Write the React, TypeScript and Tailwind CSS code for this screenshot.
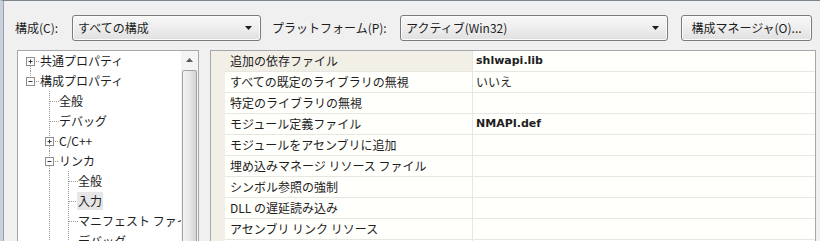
import React from 'react';

type Cell =
  | { kind: 'none' }
  | { kind: 'pass' }
  | { kind: 'tee' }
  | { kind: 'box'; sign: 'plus' | 'minus'; up: boolean; down: boolean };

type TreeItem = {
  label: string;
  cells: Cell[];
  selected?: boolean;
};

const jp = { fontFamily: '"Noto Sans CJK JP", "Noto Sans", sans-serif' };
const boldLatin = { fontFamily: '"DejaVu Sans", "Noto Sans CJK JP", sans-serif' };

const treeItems: TreeItem[] = [
  { label: '共通プロパティ', cells: [{ kind: 'box', sign: 'plus', up: false, down: true }] },
  { label: '構成プロパティ', cells: [{ kind: 'box', sign: 'minus', up: true, down: false }] },
  { label: '全般', cells: [{ kind: 'none' }, { kind: 'tee' }] },
  { label: 'デバッグ', cells: [{ kind: 'none' }, { kind: 'tee' }] },
  { label: 'C/C++', cells: [{ kind: 'none' }, { kind: 'box', sign: 'plus', up: true, down: true }] },
  { label: 'リンカ', cells: [{ kind: 'none' }, { kind: 'box', sign: 'minus', up: true, down: true }] },
  { label: '全般', cells: [{ kind: 'none' }, { kind: 'pass' }, { kind: 'tee' }] },
  { label: '入力', cells: [{ kind: 'none' }, { kind: 'pass' }, { kind: 'tee' }], selected: true },
  { label: 'マニフェスト ファイル', cells: [{ kind: 'none' }, { kind: 'pass' }, { kind: 'tee' }] },
  { label: 'デバッグ', cells: [{ kind: 'none' }, { kind: 'pass' }, { kind: 'tee' }] },
];

const props: { name?: string; value?: string; bold?: boolean; active?: boolean }[] = [
  { name: '追加の依存ファイル', value: 'shlwapi.lib', bold: true, active: true },
  { name: 'すべての既定のライブラリの無視', value: 'いいえ' },
  { name: '特定のライブラリの無視' },
  { name: 'モジュール定義ファイル', value: 'NMAPI.def', bold: true },
  { name: 'モジュールをアセンブリに追加' },
  { name: '埋め込みマネージ リソース ファイル' },
  { name: 'シンボル参照の強制' },
  { name: 'DLL の遅延読み込み' },
  { name: 'アセンブリ リンク リソース' },
  {},
];

const DOT = '#9a9a9a';

const GuideCell = ({ cell }: { cell: Cell }) => (
  <svg width="19" height="20" viewBox="0 0 19 20" className="shrink-0">
    {cell.kind === 'pass' && (
      <line x1="9.5" y1="0" x2="9.5" y2="20" stroke={DOT} strokeDasharray="1 1" />
    )}
    {cell.kind === 'tee' && (
      <>
        <line x1="9.5" y1="0" x2="9.5" y2="20" stroke={DOT} strokeDasharray="1 1" />
        <line x1="10" y1="10.5" x2="19" y2="10.5" stroke={DOT} strokeDasharray="1 1" />
      </>
    )}
    {cell.kind === 'box' && (
      <>
        {cell.up && <line x1="9.5" y1="0" x2="9.5" y2="6" stroke={DOT} strokeDasharray="1 1" />}
        {cell.down && <line x1="9.5" y1="15" x2="9.5" y2="20" stroke={DOT} strokeDasharray="1 1" />}
        <line x1="15" y1="10.5" x2="19" y2="10.5" stroke={DOT} strokeDasharray="1 1" />
        <rect x="5.5" y="6.5" width="8" height="8" fill="#fbfbfb" stroke="#8e8f8f" />
        <line x1="7.5" y1="10.5" x2="11.5" y2="10.5" stroke="#3a3a3a" />
        {cell.sign === 'plus' && <line x1="9.5" y1="8.5" x2="9.5" y2="12.5" stroke="#3a3a3a" />}
      </>
    )}
  </svg>
);

const DropArrow = () => (
  <svg width="7" height="4" viewBox="0 0 7 4">
    <path d="M0 0 H7 L3.5 4 Z" fill="#1e1e1e" />
  </svg>
);

const Combo = ({ text, width }: { text: string; width: string }) => (
  <div
    className={`${width} flex h-[26px] shrink-0 items-center justify-between rounded-[3px] border border-[#7a7a7a] bg-[linear-gradient(180deg,#f7f7f7_0%,#eeeeee_50%,#e0e0e0_100%)] pl-[5px] pr-[8px] text-[12px] text-[#1e1e1e] shadow-[inset_0_0_0_1px_#fcfcfc]`}
  >
    <span>{text}</span>
    <DropArrow />
  </div>
);

export default function App() {
  return (
    <div
      className="h-[241px] w-[820px] overflow-hidden border-l-[3px] border-t border-[#c9d2db] border-t-[#7d858d] bg-[#f0f0f0] text-[#1e1e1e]"
      style={jp}
    >
      <div className="h-full border-l border-[#97a1ab]">
        <div className="flex items-center pl-[11px] pt-[14px] text-[12px]">
          <div className="w-[57px] shrink-0">構成(C):</div>
          <Combo text="すべての構成" width="w-[189px]" />
          <div className="ml-[11px] w-[128px] shrink-0">プラットフォーム(P):</div>
          <Combo text="アクティブ(Win32)" width="w-[268px]" />
          <div className="ml-[13px] flex h-[26px] w-[131px] shrink-0 items-center justify-center rounded-[3px] border border-[#7a7a7a] bg-[linear-gradient(180deg,#f7f7f7_0%,#eeeeee_50%,#e0e0e0_100%)] shadow-[inset_0_0_0_1px_#fcfcfc]">
            構成マネージャ(O)...
          </div>
        </div>

        <div className="mt-[9px] flex pl-[13px]">
          <div className="flex h-[200px] w-[182px] shrink-0 border border-[#a4a7ab] bg-white">
            <div className="min-w-0 flex-1 overflow-hidden pl-[3px] text-[12px]">
              {treeItems.map((item, i) => (
                <div key={i} className="flex h-[20px] items-center whitespace-nowrap">
                  {item.cells.map((c, j) => (
                    <GuideCell key={j} cell={c} />
                  ))}
                  <span
                    className={`ml-[-1px] px-[1px] leading-[18px] ${item.selected ? 'bg-[#e6e6e6]' : ''}`}
                  >
                    {item.label}
                  </span>
                </div>
              ))}
            </div>
            <div className="flex w-[17px] shrink-0 flex-col bg-[#f4f4f4]">
              <div className="flex h-[18px] items-center justify-center">
                <svg width="7" height="4" viewBox="0 0 7 4">
                  <path d="M0 4 H7 L3.5 0 Z" fill="#5a5a5a" />
                </svg>
              </div>
              <div className="mx-[1px] mt-[1px] flex-1 rounded-[2px] border border-[#a2a2a2] bg-[linear-gradient(90deg,#f3f3f3_0%,#e8e8e8_50%,#d4d4d4_100%)]" />
            </div>
          </div>

          <div className="ml-[11px] flex h-[200px] w-[606px] shrink-0 border border-[#a4a7ab] bg-[#fffffc]">
            <div className="w-[14px] shrink-0 bg-[#f2f0e6]" />
            <div className="flex-1">
              {props.map((p, i) => (
                <div key={i} className="flex h-[21px] border-b border-[#e6e6e3] text-[12px] leading-[20px]">
                  <div
                    className={`w-[248px] shrink-0 border-r border-[#e6e6e3] pl-[5px] ${p.active ? 'bg-[#f1efe6]' : ''}`}
                  >
                    {p.name}
                  </div>
                  <div
                    className={`flex-1 pl-[3px] ${p.bold ? 'text-[11px] font-bold' : ''}`}
                    style={p.bold ? boldLatin : undefined}
                  >
                    {p.value}
                  </div>
                </div>
              ))}
            </div>
          </div>
        </div>
      </div>
    </div>
  );
}
